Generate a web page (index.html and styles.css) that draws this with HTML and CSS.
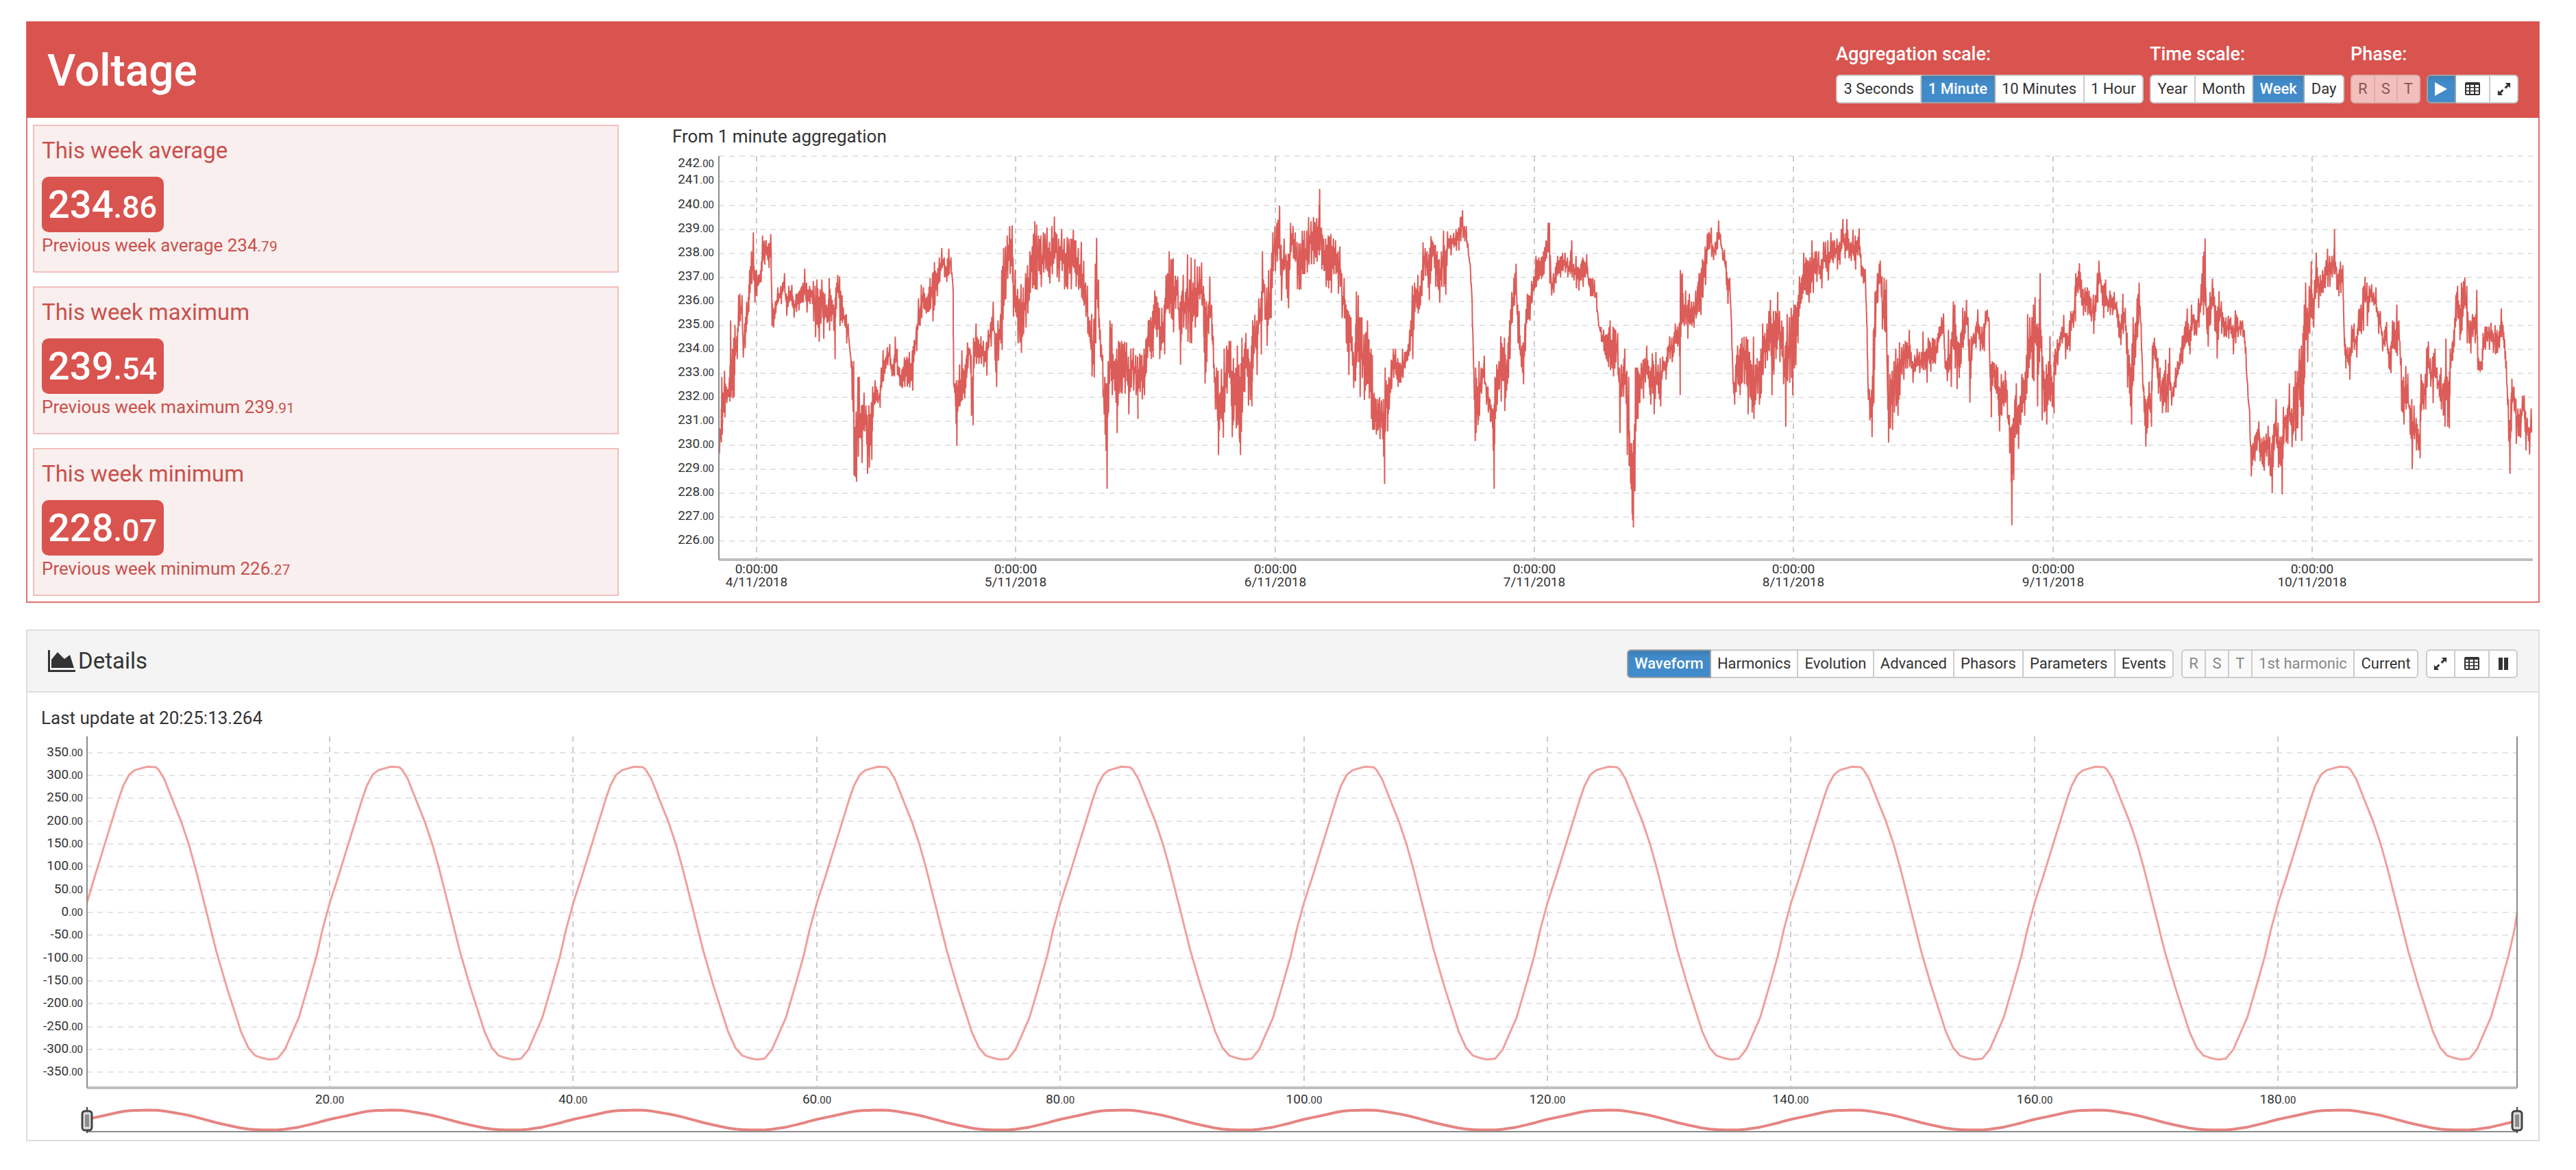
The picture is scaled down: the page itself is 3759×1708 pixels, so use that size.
FILE: index.html
```html
<!DOCTYPE html>
<html lang="en">
<head>
<meta charset="utf-8">
<title>Voltage</title>
<link rel="stylesheet" href="styles.css">
</head>
<body>
<svg class="sprite" aria-hidden="true">
  <symbol id="icon-table" viewBox="0 0 22 20"><path fill="currentColor" fill-rule="evenodd" d="M2 0h18a2 2 0 0 1 2 2v15a2 2 0 0 1-2 2H2a2 2 0 0 1-2-2V2a2 2 0 0 1 2-2zM2 4v3h4V4zm6 0v3h5V4zm7 0v3h5V4zM2 8.500v3.500h4V8.500zm6 0v3.500h5V8.500zm7 0v3.500h5V8.500zM2 13.500v3.500h4v-3.500zm6 0v3.500h5v-3.500zm7 0v3.500h5v-3.500z"/></symbol>
  <symbol id="icon-expand" viewBox="0 0 22 22"><path fill="currentColor" d="M13 1h8v8l-2.800-2.700-4.300 4.300-2.300-2.300 4.300-4.300zM9 21H1v-8l2.800 2.700 4.300-4.300 2.300 2.300-4.300 4.300z"/></symbol>
  <symbol id="icon-play" viewBox="0 0 20 20"><path fill="currentColor" d="M1 0l18 10L1 20z"/></symbol>
  <symbol id="icon-pause" viewBox="0 0 14 18"><path fill="currentColor" d="M0 0h6v18H0zM8 0h6v18H8z"/></symbol>
  <symbol id="icon-area" viewBox="0 0 40 32"><path fill="currentColor" d="M0 0h3v29h37v3H0zM5 26V14l9-11 10 10 8-6 6 19z"/></symbol>
</svg>

<main class="dashboard">
  <section class="panel panel-voltage">
    <header class="panel-head head-voltage">
      <h1 class="title">Voltage</h1>
      <div class="controls">
        <div class="control">
          <span class="control-label" id="agg">Aggregation scale:</span>
          <div class="group group-agg" role="group" aria-labelledby="agg">
            <button type="button" class="btn">3 Seconds</button><button type="button" class="btn active">1 Minute</button><button type="button" class="btn">10 Minutes</button><button type="button" class="btn">1 Hour</button>
          </div>
        </div>
        <div class="control">
          <span class="control-label" id="time">Time scale:</span>
          <div class="group group-time" role="group" aria-labelledby="time">
            <button type="button" class="btn">Year</button><button type="button" class="btn">Month</button><button type="button" class="btn active">Week</button><button type="button" class="btn">Day</button>
          </div>
        </div>
        <div class="control">
          <span class="control-label" id="phase">Phase:</span>
          <div class="group group-phase" role="group" aria-labelledby="phase">
            <button type="button" class="btn" disabled>R</button><button type="button" class="btn" disabled>S</button><button type="button" class="btn" disabled>T</button>
          </div>
        </div>
        <div class="control">
          <div class="group group-icons">
            <button type="button" class="btn active" aria-label="Play"><svg class="icon"><use href="#icon-play"/></svg></button><button type="button" class="btn wide" aria-label="Table"><svg class="icon"><use href="#icon-table"/></svg></button><button type="button" class="btn" aria-label="Expand"><svg class="icon"><use href="#icon-expand"/></svg></button>
          </div>
        </div>
      </div>
    </header>
    <div class="voltage-body">
      <div class="cards">
        <article class="card">
          <h2 class="card-title">This week average</h2>
          <p class="badge">234<small>.86</small></p>
          <p class="previous">Previous week average 234<small>.79</small></p>
        </article>
        <article class="card">
          <h2 class="card-title">This week maximum</h2>
          <p class="badge">239<small>.54</small></p>
          <p class="previous">Previous week maximum 239<small>.91</small></p>
        </article>
        <article class="card">
          <h2 class="card-title">This week minimum</h2>
          <p class="badge">228<small>.07</small></p>
          <p class="previous">Previous week minimum 226<small>.27</small></p>
        </article>
      </div>
      <div class="trend">
        <h3 class="chart-title">From 1 minute aggregation</h3>
        <svg class="chart" id="trend" viewBox="0 0 2716 650" role="img" aria-label="Voltage trend"></svg>
      </div>
    </div>
  </section>

  <section class="panel panel-details">
    <header class="panel-head head-details">
      <h2 class="subtitle"><svg class="icon-area"><use href="#icon-area"/></svg>Details</h2>
      <div class="controls controls-details">
        <div class="group group-views">
          <button type="button" class="btn active">Waveform</button><button type="button" class="btn">Harmonics</button><button type="button" class="btn">Evolution</button><button type="button" class="btn">Advanced</button><button type="button" class="btn">Phasors</button><button type="button" class="btn">Parameters</button><button type="button" class="btn">Events</button>
        </div>
        <div class="group group-signal">
          <button type="button" class="btn" disabled>R</button><button type="button" class="btn" disabled>S</button><button type="button" class="btn" disabled>T</button><button type="button" class="btn" disabled>1st harmonic</button><button type="button" class="btn">Current</button>
        </div>
        <div class="group group-icons">
          <button type="button" class="btn" aria-label="Expand"><svg class="icon"><use href="#icon-expand"/></svg></button><button type="button" class="btn wide" aria-label="Table"><svg class="icon"><use href="#icon-table"/></svg></button><button type="button" class="btn" aria-label="Pause"><svg class="icon icon-pause"><use href="#icon-pause"/></svg></button>
        </div>
      </div>
    </header>
    <div class="details-body">
      <p class="updated">Last update at 20:25:13.264</p>
      <svg class="chart" id="wave" viewBox="0 0 3637 590" role="img" aria-label="Voltage waveform"></svg>
    </div>
  </section>
</main>
<script src="charts.js"></script>
</body>
</html>
```
FILE: styles.css
```css
* { box-sizing: border-box; }

body {
  margin: 0;
  background: #fff;
  color: #333;
  font-family: Roboto, "Open Sans", sans-serif;
}

h1, h2, h3, p { margin: 0; font-weight: 400; }
small { line-height: 0; }

.sprite { display: none; }

.dashboard {
  display: flex;
  flex-direction: column;
  gap: 39px;
  padding: 31px 53px 40px 38px;
}

.panel { background: #fff; border: 2px solid #ddd; }
.panel-voltage { border-color: #e2716d; }

.panel-head {
  display: flex;
  align-items: center;
  justify-content: space-between;
  padding: 0 30px;
}
.head-voltage { height: 140px; background: #d9534f; color: #fff; margin: -1px -1px 0; padding: 4px 30px 0; }
.head-details { height: 90px; background: #f4f4f4; border-bottom: 2px solid #ddd; }

.title { font-size: 64px; font-weight: 500; line-height: 72px; }
.subtitle { display: flex; align-items: center; gap: 4px; font-size: 33px; line-height: 40px; }
.icon-area { width: 40px; height: 32px; }

.controls { display: flex; align-items: flex-end; gap: 9px; padding-top: 6px; }
.controls-details { gap: 11px; padding-top: 8px; }
.control { display: flex; flex-direction: column; gap: 14px; }
.control-label { font-size: 27px; font-weight: 500; line-height: 32px; }

.group { display: flex; }
.group-agg { width: 449px; }
.group-time { width: 284px; }
.group-phase { width: 102px; }
.group-icons { width: 134px; }
.group-views { width: 798px; }
.group-signal { width: 346px; }

.btn {
  flex: 1 1 auto;
  display: flex;
  align-items: center;
  justify-content: center;
  height: 42px;
  margin: 0;
  padding: 0 8px;
  border: 2px solid #ccc;
  border-left-width: 0;
  background: #fff;
  color: #333;
  font: 400 22px/24px Roboto, "Open Sans", sans-serif;
  white-space: nowrap;
}
.btn:first-child { border-left-width: 2px; border-radius: 6px 0 0 6px; }
.btn:last-child { border-radius: 0 6px 6px 0; }
.btn.active {
  background: linear-gradient(#3c7db5, #428bca 25%);
  border-color: #a0a0a0;
  color: #fff;
  font-weight: 500;
}
.head-details .btn:disabled { background: #fafafa; color: #888; }
.head-voltage .btn:disabled { background: #f2bfbd; border-color: #dfadab; color: #8a5553; }
.wide { padding: 0 13px; }

.icon { width: 22px; height: 20px; }
.icon-pause { height: 18px; }

.voltage-body {
  display: grid;
  grid-template-columns: 855fr 2716fr;
  column-gap: 78px;
  padding: 10px 7px 8px 8px;
}

.cards { display: flex; flex-direction: column; gap: 20px; }
.card {
  padding: 16px 11px 17px;
  border: 2px solid #f2bfbd;
  background: #f9efee;
  color: #c9504c;
}
.card-title { font-size: 33px; line-height: 40px; }
.badge {
  width: max-content;
  min-width: 178px;
  margin-top: 18px;
  padding: 1px 9px 0;
  border-radius: 10px;
  background: #d9534f;
  color: #fff;
  font-size: 56px;
  font-weight: 500;
  line-height: 80px;
}
.badge small { font-size: 45px; }
.previous { font-size: 26px; line-height: 38px; padding-bottom: 2px; }
.previous small { font-size: 21px; }

.chart { display: block; width: 100%; height: auto; overflow: visible; }
.chart-title { font-size: 26px; line-height: 34px; }

.details-body { padding: 17px 7px 6px 20px; }
.updated { font-size: 26px; line-height: 40px; }

.grid-h { stroke: #e4e4e4; stroke-width: 2; stroke-dasharray: 8 7; }
.grid-v { stroke: #ccc; stroke-width: 2; stroke-dasharray: 8 7; }
.axis { stroke: #8c8c8c; stroke-width: 2; }
.axis-base { stroke: #bfbfbf; stroke-width: 4; }
.tick { fill: #333; font-size: 19px; }
.tick-decimals { font-size: 15px; }
.end { text-anchor: end; }
.mid { text-anchor: middle; }
.trend-line { fill: none; stroke: #d9534f; stroke-width: 2; stroke-opacity: 0.95; stroke-linejoin: round; }
.wave-line { fill: none; stroke: #efa09d; stroke-width: 3; stroke-linejoin: round; }
.overview-line { fill: none; stroke: #e68481; stroke-width: 4; stroke-linejoin: round; }
.handle { fill: #ddd; stroke: #444; stroke-width: 3; }
.grip { fill: #8c8c8c; }
.handle-stem { stroke: #444; stroke-width: 2; }
```
FILE: charts.js
```js
const NS = "http://www.w3.org/2000/svg";

function add(parent, name, attrs, text) {
  const el = document.createElementNS(NS, name);
  for (const key in attrs) el.setAttribute(key, attrs[key]);
  if (text !== undefined) el.textContent = text;
  parent.appendChild(el);
  return el;
}

function line(svg, cls, x1, y1, x2, y2) {
  add(svg, "line", { class: cls, x1, y1, x2, y2 });
}

function tick(svg, cls, x, y, value) {
  const label = add(svg, "text", { class: "tick " + cls, x, y }, String(value));
  add(label, "tspan", { class: "tick-decimals" }, ".00");
}

/* Week trend: each block lists "position,high,low" readings; origin and
   scale place the block on the time axis. */
const blocks = [
  { origin: -21, scale: 2.24, data: "200,990,1070 206,1000,1035 209,830,1010 218,810,955 224,860,910 234,830,905 238,650,890 244,740,895 248,705,890 252,665,760 258,700,770 264,570,665 268,565,650 275,570,660 278,700,765 284,660,735 290,590,660 296,575,620 300,490,560 306,430,530 312,370,520 316,490,590 322,490,570 328,505,535 336,490,525 342,380,460 348,395,470 354,395,440 362,405,480 369,376,430 372,550,665 377,610,670 384,590,625 392,545,590 402,540,595 408,530,555 414,500,560 420,565,632 428,540,590 438,537,600 444,585,638 452,565,620 460,560,615 468,545,590 474,530,590 480,486,560 486,530,622 496,540,595 504,555,595 508,525,650 514,540,700 520,520,660 526,575,715 536,520,600 541,560,705 546,565,635 552,600,655 556,610,650 560,515,680 566,570,650 574,600,680 578,610,770 582,545,610 588,505,560 594,510,665 602,570,655 610,635,665 616,630,720 622,660,700 628,745,760 634,780,900 640,780,1140 648,940,1160 654,830,1080 658,830,1020 666,920,1100 674,880,1000 680,920,1000 684,950,1135 690,920,1115 698,910,1090 702,860,955 710,840,910 718,870,910 725,880,925 730,800,860 736,745,840 744,770,800 750,735,790 758,725,790 764,790,825 772,770,825 776,702,780 782,740,820 790,800,855 798,805,862 806,768,858 814,765,858 822,750,860 832,745,870 838,712,755 845,670,745 852,580,660 856,615,665 861,537,640 868,545,610 876,580,625 884,565,620 890,515,610 898,500,650 904,465,600 912,500,570 920,450,525 928,420,480 936,450,510 943,480,525 951,422,500 958,450,500 964,535,560 967,850,860 972,850,920 976,840,1045 982,840,920 986,790,920 994,745,900 1002,810,895 1008,770,830 1012,720,800 1020,740,760 1024,760,950 1029,830,980 1032,705,800 1040,660,785 1048,710,785 1056,700,785 1064,715,795 1074,718,822 1080,680,735 1088,655,730 1096,590,670 1101,690,775 1106,690,858 1112,650,775 1120,630,720 1124,490,740 1130,420,600 1136,415,580 1142,380,515 1150,350,500 1158,348,520 1161,450,635 1168,490,620 1176,550,720 1187,535,750 1194,545,690 1202,500,670 1208,475,625 1216,430,560 1224,415,545 1232,335,548 1238,345,550 1244,380,490 1252,380,540 1260,370,495 1272,355,490 1280,400,530 1288,350,500 1296,320,450 1304,375,510 1310,390,525 1320,360,490 1328,390,548 1338,385,548 1350,390,548 1358,362,480 1366,395,540 1374,420,550 1384,400,575 1392,460,600 1398,530,635 1404,540,690 1412,650,720 1418,630,825 1425,645,828 1430,470,720 1434,388,580 1440,520,670 1446,680,765 1454,760,890 1461,830,1010 1467,850,1182 1472,780,940 1478,650,800 1484,660,885 1492,780,870 1500,740,1005 1506,715,880 1516,715,880 1526,718,880 1532,720,840 1538,765,945 1546,740,860 1554,738,870 1562,760,885 1568,765,960" },
  { origin: 659, scale: 2.24, data: "45,770,870 52,755,875 59,760,898 66,740,885 72,710,815 80,650,730 88,640,770 94,620,765 101,555,660 107,575,700 116,610,770 124,610,720 132,600,755 138,505,610 143,500,612 148,430,625 154,455,640 161,452,685 168,508,610 176,510,612 184,590,788 188,570,690 194,505,670 202,560,675 208,440,715 215,520,718 220,450,720 226,530,635 232,455,670 240,478,635 247,478,580 254,466,600 260,540,700 264,580,848 270,590,780 276,600,690 281,510,640 287,600,710 292,700,800 298,830,930 303,800,930 308,810,1075 314,880,960 319,805,960 324,870,1020 328,740,940 336,730,880 344,715,830 349,715,850 353,810,1018 358,770,965 366,800,990 371,730,980 376,790,1025 380,830,1075 386,705,940 394,740,875 399,690,800 406,740,918 412,790,900 417,730,920 421,650,800 428,632,730 434,650,820 441,580,660 448,580,755 453,430,560 460,535,645 467,545,728 473,490,645 480,485,640 487,370,490 494,350,490 500,340,460 509,285,455 514,410,585 524,390,485 530,440,548 537,440,608 545,340,430 553,350,450 560,370,460 566,400,548 572,405,550 577,405,548 583,365,500 590,365,500 598,365,495 604,322,470 612,335,468 620,322,468 630,325,460 637,325,440 640,232,425 646,355,485 653,390,490 660,390,540 668,380,545 677,375,560 685,390,500 692,395,500 700,430,562 706,415,540 712,500,640 720,515,640 726,600,720 734,620,820 742,640,745 750,750,862 756,720,840 760,558,780 766,570,780 771,640,890 778,640,830 785,695,900 790,690,855 796,650,850 801,710,895 808,740,960 812,760,995 818,880,995 824,900,1010 830,900,995 836,895,1025 842,905,990 848,900,1080 851,960,1167 854,800,1000 861,855,1000 866,830,930 874,775,865 881,740,830 888,740,820 895,770,858 904,785,845 911,740,830 918,750,800 926,745,775 934,680,745 943,540,770 950,530,620 956,555,605 961,505,625 968,540,600 973,490,570 978,402,520 985,420,505 991,430,505 997,440,582 1004,382,490 1010,400,440 1018,410,540 1024,430,540 1031,455,590 1038,430,540 1045,365,540 1051,430,565 1058,367,420 1068,378,440 1078,372,415 1086,360,425 1094,355,425 1100,322,395 1107,300,385 1113,350,395 1119,350,400 1125,405,440 1132,470,500 1137,560,590 1142,740,800 1147,880,1030 1150,800,1005 1156,860,980 1161,780,950 1168,800,880 1178,762,850 1184,860,915 1190,860,940 1197,900,970 1204,930,990 1209,930,1182 1213,830,960 1219,790,915 1226,780,865 1232,700,905 1239,735,840 1244,705,935 1250,790,870 1256,720,830 1261,650,770 1268,560,655 1275,515,600 1282,470,570 1287,600,720 1292,620,740 1298,740,795 1305,720,850 1311,660,745 1319,565,645 1326,570,648 1333,525,590 1340,510,550 1347,445,540 1356,450,515 1364,450,515 1372,430,500 1380,395,450 1387,340,420 1391,340,530 1397,530,568 1404,500,560 1411,480,530 1418,445,500 1426,448,510 1434,435,490 1442,435,495 1450,450,510 1458,460,500 1464,395,510 1470,470,520 1478,445,545 1486,480,552 1494,470,520 1500,450,540 1507,465,510 1513,440,500 1518,510,535 1524,515,570 1532,515,570 1538,520,575 1545,560,620 1551,650,665 1560,670,715 1568,680,735" },
  { origin: 1339, scale: 2.24, data: "45,680,745 52,695,770 60,690,795 66,650,805 76,670,825 84,680,780 91,690,820 97,800,1005 103,790,890 109,795,890 114,740,850 121,810,1075 127,830,1110 132,1040,1165 137,1040,1262 141,1070,1305 146,980,1190 149,800,1000 156,800,960 162,820,910 168,785,865 174,775,895 180,770,845 186,730,820 193,795,860 198,810,915 204,755,880 209,790,945 216,750,850 223,790,880 230,770,920 238,765,810 248,780,835 254,735,780 261,700,770 268,705,780 274,700,750 279,660,720 286,670,730 292,660,730 294,655,884 296,490,700 302,500,650 307,600,665 313,555,660 319,600,705 325,565,660 332,590,665 339,590,670 346,555,640 352,540,620 357,500,620 362,500,630 368,455,575 377,415,535 384,375,425 390,368,420 397,355,445 403,415,455 410,400,440 416,370,420 421,332,390 427,375,410 433,420,455 440,425,470 445,460,535 450,515,595 457,515,560 462,640,665 467,800,850 472,850,915 477,790,875 483,730,850 490,740,885 497,705,845 504,702,850 511,702,850 516,710,945 522,750,890 529,790,940 535,702,960 541,790,900 547,770,880 553,780,915 559,740,880 565,660,820 572,690,800 579,660,775 585,620,745 590,585,720 594,690,885 600,620,820 607,620,770 614,560,710 620,620,780 627,650,760 632,670,850 639,730,985 645,630,840 652,640,845 658,610,830 662,640,885 667,600,800 672,600,790 679,590,720 685,510,610 692,515,580 699,435,550 706,450,565 715,460,590 720,450,560 726,395,520 729,470,560 736,430,500 741,430,525 748,430,500 757,455,545 764,400,460 770,400,480 778,395,520 788,370,450 794,395,465 800,395,450 808,390,485 816,400,470 822,360,420 827,328,400 833,390,450 840,328,425 846,390,450 853,400,458 860,362,440 867,380,485 874,395,440 880,357,440 886,440,505 893,480,530 900,487,540 905,650,680 909,850,900 914,870,965 921,870,1018 927,680,910 932,560,700 940,500,590 946,470,530 949,460,520 955,510,675 962,515,680 969,520,730 972,800,880 975,760,1035 981,820,990 988,810,995 994,780,940 1000,740,920 1006,770,950 1012,720,885 1019,735,820 1025,725,835 1031,715,800 1037,720,800 1044,680,795 1050,750,800 1055,780,845 1062,760,810 1070,740,790 1077,750,815 1084,750,800 1089,685,805 1095,750,805 1101,740,845 1106,705,770 1113,720,810 1120,705,785 1128,710,785 1135,705,750 1142,670,705 1150,640,690 1156,628,700 1160,740,800 1167,780,840 1172,680,810 1180,710,858 1188,590,740 1193,600,800 1199,700,865 1206,720,830 1212,690,785 1219,610,735 1225,620,690 1231,585,660 1236,640,730 1241,710,908 1247,700,775 1254,690,720 1261,670,735 1268,615,690 1275,670,745 1282,670,740 1288,660,745 1293,620,660 1299,615,650 1304,640,660 1307,770,830 1311,790,955 1315,780,855 1322,785,860 1328,790,880 1333,800,900 1338,860,1000 1345,820,950 1352,840,920 1358,810,910 1364,870,960 1371,950,1070 1376,990,1100 1378,990,1298 1384,960,1155 1389,900,1020 1394,850,1010 1400,920,1055 1407,890,980 1412,820,940 1420,840,950 1427,760,880 1431,630,830 1438,640,770 1445,640,830 1450,600,840 1455,576,720 1462,660,920 1468,660,780 1472,500,730 1477,700,965 1484,810,940 1492,790,978 1499,780,900 1504,700,905 1510,830,920 1516,850,942 1518,760,820 1521,740,820 1528,710,790 1536,700,730 1543,670,720 1549,632,700 1554,690,770 1560,690,740 1568,650,745" },
  { origin: 2019, scale: 2.066, data: "45,620,680 52,620,670 58,540,650 60,500,570 66,510,560 71,468,550 77,520,600 82,550,632 88,545,620 95,545,630 100,555,625 106,580,650 113,568,690 119,570,620 125,500,590 130,460,530 136,520,560 143,540,640 150,520,600 156,580,620 163,555,630 170,580,630 176,560,610 183,590,640 189,630,700 195,660,725 202,565,690 209,610,680 215,690,860 221,760,880 227,800,978 233,640,840 239,660,765 245,580,700 251,530,630 257,660,740 261,790,860 265,860,940 270,900,1048 276,900,990 281,845,930 287,900,985 291,730,800 297,705,770 303,740,800 308,770,880 314,800,905 320,840,942 326,820,905 331,775,940 337,820,940 343,737,870 348,860,918 354,860,890 361,800,860 367,780,820 374,755,790 381,700,785 388,670,730 396,612,715 403,680,755 409,600,680 416,630,695 423,650,695 430,580,670 438,535,600 444,445,630 450,390,600 454,610,675 458,610,730 465,560,660 472,517,600 478,575,680 485,620,768 492,557,650 499,590,690 506,640,700 513,640,700 520,635,705 527,640,690 534,665,755 541,618,720 548,640,700 556,650,695 563,650,700 568,680,720 573,735,800 578,850,890 584,935,1000 588,1050,1143 594,1040,1090 599,1020,1095 605,1005,1060 612,970,1040 615,1020,1095 621,1025,1105 627,1020,1125 634,1010,1080 640,985,1110 645,1020,1140 651,1040,1195 657,980,1060 664,900,1040 670,975,1115 676,1020,1110 681,1020,1200 686,925,1040 693,950,1035 698,930,1040 704,850,970 711,930,1050 717,860,1000 722,810,1030 728,810,990 734,740,900 740,730,1030 745,690,950 749,600,830 753,530,710 758,610,780 764,540,690 770,463,640 776,580,670 785,435,560 791,510,608 797,505,570 804,490,560 811,480,545 819,422,540 825,445,540 832,445,510 838,440,500 840,360,500 846,480,550 852,500,570 858,463,560 865,475,580 869,680,730 873,725,800 879,735,780 885,735,835 892,665,750 899,660,740 906,700,765 913,615,680 920,600,690 926,545,680 932,512,590 938,530,665 945,540,590 952,535,590 958,560,600 965,545,620 972,620,690 978,620,670 984,685,745 991,680,730 997,655,720 1003,740,800 1009,730,815 1015,650,735 1020,655,740 1028,600,760 1034,650,710 1041,770,935 1048,830,978 1055,795,930 1061,820,910 1067,920,1010 1073,900,1120 1080,920,1025 1086,960,1060 1092,995,1060 1097,1010,1085 1101,820,935 1108,850,930 1114,820,930 1118,740,860 1123,717,800 1129,770,858 1136,765,910 1143,740,830 1149,800,865 1155,840,890 1161,800,930 1167,850,950 1172,840,985 1176,708,900 1180,830,985 1185,840,990 1189,740,800 1195,720,775 1200,680,730 1206,570,650 1211,540,640 1217,600,710 1223,530,680 1229,525,610 1233,513,600 1239,540,720 1245,650,720 1250,650,752 1256,630,700 1263,640,720 1269,553,700 1271,700,805 1278,780,810 1284,780,805 1288,690,740 1294,670,740 1300,670,715 1306,670,740 1312,657,715 1318,690,750 1324,665,755 1330,680,750 1336,685,735 1343,612,700 1348,665,710 1353,710,770 1358,780,850 1364,900,1030 1368,1000,1135 1372,900,1000 1375,835,910 1381,860,935 1387,900,1040 1393,930,1015 1400,930,1020 1407,890,935 1412,888,960 1416,940,1060 1421,960,1000 1427,990,1073 1433,930,1005" }
];

function drawTrend() {
  const svg = document.getElementById("trend");
  const left = 68, right = 2715, top = 12, bottom = 601;
  for (let v = 242; v >= 226; v--) {
    const y = v === 242 ? top : v === 241 ? 49 : 84 + (240 - v) * 35;
    line(svg, "grid-h", left, y, right, y);
    tick(svg, "end", 61, v === 242 ? 28 : v === 241 ? 52 : y + 4, v);
  }
  for (let day = 0; day < 7; day++) {
    const x = 123 + Math.round(day * 378.3);
    line(svg, "grid-v", x, top, x, bottom);
    add(svg, "text", { class: "tick mid", x, y: 621 }, "0:00:00");
    add(svg, "text", { class: "tick mid", x, y: 640 }, day + 4 + "/11/2018");
  }
  line(svg, "axis-base", left, bottom, right, bottom);

  let seed = 7;
  const random = () => (seed = (seed * 16807) % 2147483647) / 2147483647;
  const points = [];
  for (const block of blocks) {
    const rows = block.data.split(" ").map(row => row.split(",").map(Number));
    rows.forEach(([p, hi, lo], i) => {
      const x = block.origin + p / block.scale;
      const next = rows[i + 1];
      const put = (px, level) => points.push(px.toFixed(1) + "," + (level / 2.178 - 46).toFixed(1));
      put(x, hi);
      put(x + 0.6, lo);
      if (next) {
        const nx = block.origin + next[0] / block.scale;
        const h = (hi + next[1]) / 2, l = (lo + next[2]) / 2, m = (l - h) * 0.5;
        put(x + (nx - x) * 0.45, h + random() * m);
        put(x + (nx - x) * 0.7, l - random() * m);
      }
    });
  }
  add(svg, "polyline", { class: "trend-line", points: points.join(" ") });
  line(svg, "axis", left, top, left, bottom);
}

/* One 20 ms mains cycle: [milliseconds, volts]. */
const cycle = [[0, 22], [0.7, 79], [1.4, 140], [2.65, 248], [3.03, 277], [3.5, 301], [3.95, 311], [4.3, 314], [5, 319], [5.7, 318], [5.95, 312], [6.4, 292], [7.15, 241], [7.8, 198], [8.4, 150], [8.95, 98], [9.9, -2], [10.65, -83], [11.5, -161], [12.7, -261], [13.3, -296], [13.85, -313], [14.5, -319], [15.05, -322], [15.7, -320], [16.3, -300], [17.45, -230], [18.25, -157], [18.9, -95], [19.4, -37]];

function drawWave() {
  const svg = document.getElementById("wave");
  const left = 67, right = 3613, top = 7, bottom = 520;
  for (let v = 350; v >= -350; v -= 50) {
    const y = Math.round(264 - v * 0.667);
    line(svg, "grid-h", left, y, right, y);
    tick(svg, "end", 61, y + 5, v);
  }
  for (let t = 20; t <= 180; t += 20) {
    const x = Math.round(421 + (t - 20) * 17.77);
    line(svg, "grid-v", x, top, x, bottom);
    tick(svg, "mid", x, 543, t);
  }
  line(svg, "axis-base", left, bottom, right, bottom);

  const wave = [], overview = [];
  for (let n = 0; n < 10; n++) {
    for (const [ms, volts] of cycle) {
      const x = Math.min(right, Math.max(left, 66 + (n * 20 + ms) * 17.77));
      wave.push(x.toFixed(1) + "," + (264 - volts * 0.667).toFixed(1));
      overview.push(x.toFixed(1) + "," + (567 - volts * 0.045).toFixed(1));
    }
  }
  wave.push(right + ",264");
  overview.push(right + ",567");
  add(svg, "polyline", { class: "wave-line", points: wave.join(" ") });
  add(svg, "polyline", { class: "overview-line", points: overview.join(" ") });
  line(svg, "axis", left, top, left, bottom);
  line(svg, "axis", right, top, right, bottom);
  line(svg, "axis", left, 584, right, 584);
  for (const x of [left, right]) {
    line(svg, "handle-stem", x, 548, x, 586);
    add(svg, "rect", { class: "handle", x: x - 7, y: 554, width: 14, height: 28, rx: 4 });
    add(svg, "rect", { class: "grip", x: x - 3, y: 559, width: 6, height: 18 });
  }
}

drawTrend();
drawWave();
```
